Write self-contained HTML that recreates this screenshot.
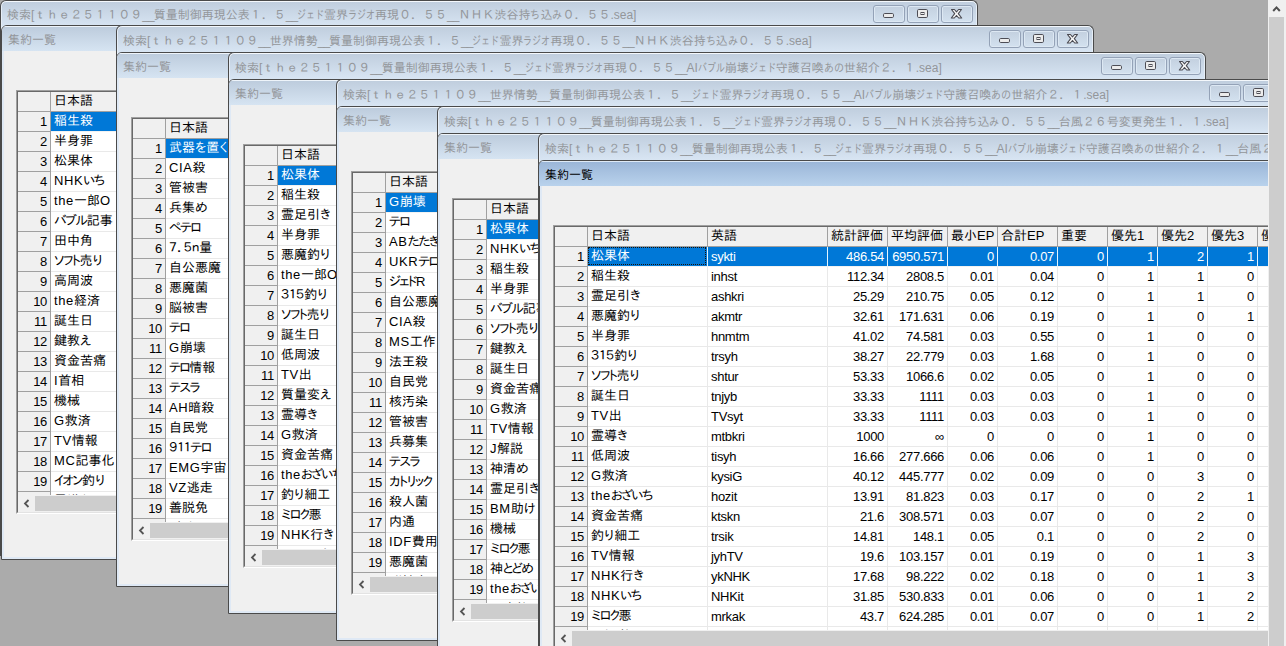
<!DOCTYPE html><html lang="ja"><head><meta charset="utf-8"><title>検索</title><style>
html,body{margin:0;padding:0}
body{width:1286px;height:646px;overflow:hidden;position:relative;background:#ababab;font-family:"Liberation Sans","IPAPGothic","IPAGothic",sans-serif;font-size:13px;color:#000}
.ow{position:absolute;width:976px;border:1px solid #4a4a4a;border-bottom:none;border-radius:6px 6px 0 0;background:#d6e4f2 linear-gradient(#bfcddd,#d8e5f3) 0 0/100% 26px no-repeat;box-shadow:inset 0 1px 0 #f4f8fc,inset 1px 0 0 #e6eef7,inset -1px 0 0 #e6eef7;overflow:hidden}
.tt{position:absolute;left:6px;top:0;white-space:nowrap;font-size:12px;color:#93969a;font-family:"Liberation Sans","IPAGothic",sans-serif}
.u{letter-spacing:-1px}
.kw{transform:scaleX(.833) !important}
.k{display:inline-block;transform:scaleX(.75);transform-origin:0 0;white-space:nowrap;vertical-align:top}
.btn{position:absolute;top:4px;width:30px;height:16px;border:1px solid #94a2b7;border-radius:3px;box-shadow:inset 0 0 0 1px #dde8f3;background:linear-gradient(#c3d0df,#d3e1ef)}
.iw{position:absolute;width:976px;height:533px;border:1px solid #4a4a4a;border-radius:6px 6px 0 0;background:#f0f0f0;overflow:hidden}
.it{position:absolute;left:0;top:0;right:0;height:25px;background:linear-gradient(#bccbdc,#d6e4f2);box-shadow:inset 0 1px 0 #eef4fa}
.iw.act .it{background:linear-gradient(#9ab5d7,#b9d2ec);box-shadow:inset 0 1px 0 #dfeaf6}
.itx{position:absolute;left:6px;top:7px;font-size:12px;line-height:14px;color:#93969a;white-space:nowrap}
.iw.act .itx{color:#000}
.iw.act{box-shadow:inset 1px 0 0 #4a4a4a}
.iw.act .fr{left:1px}
.fr{position:absolute;left:0;top:25px;right:0;bottom:0;border:2px solid #dfe9f5;border-top:none}
.grid{position:absolute;left:14px;top:64px;border:1px solid #a0a0a0;border-right-color:#fff;border-bottom-color:#fff;overflow:hidden}
.gi{position:relative;border:1px solid #696969;border-right-color:#e3e3e3;border-bottom-color:#e3e3e3;background:#fff;overflow:hidden}
.c{position:absolute;height:19px;line-height:19px;white-space:nowrap;overflow:hidden;box-sizing:border-box}
.h{background:#f0f0f0;border-right:1px solid #a0a0a0;border-bottom:1px solid #a0a0a0;height:20px;padding-left:3px}
.n{background:#f0f0f0;border-right:1px solid #a0a0a0;border-bottom:1px solid #a0a0a0;height:20px;text-align:right;padding-right:3px;letter-spacing:-0.3px}
.d{border-right:1px solid #e9e9e9;border-bottom:1px solid #e9e9e9;height:20px;padding-left:3px}
.r{text-align:right;padding-right:3px;padding-left:0}
.l{letter-spacing:-0.3px}
.j{line-height:17px}
.kk{letter-spacing:-1.5px}
.kh{letter-spacing:-1.6px}
.la{letter-spacing:.6px}
.fc{position:absolute;left:0;top:0;right:1px;bottom:1px;border:1px dotted #1a1208}
.s{background:#0078d7;color:#fff;border-right-color:#e2f4ff;border-bottom-color:#f2f2f2}
.hs{position:absolute;left:0;height:17px;background:#f0f0f0}
.th{position:absolute;left:17px;top:1px;height:15px;background:#cdcdcd}
.vs{position:absolute;left:1268px;top:0;width:18px;height:646px;background:#f0f0f0}
.vt{position:absolute;left:1px;top:17px;width:15px;height:629px;background:#cdcdcd}
</style></head><body>
<div class="ow" style="left:0px;top:0px;height:555px;z-index:10">
<div class="tt" style="line-height:14px;top:7px">検索[ｔｈｅ２５１１０９<span class="u">__</span>質量制御再現公表１．５<span class="u">__</span><span class="k" style="width:27.0px">ジェド</span>霊界<span class="k" style="width:27.0px">ラジオ</span>再現０．５５<span class="u">__</span>ＮＨＫ渋谷持<span class="k kw" style="width:10.0px">ち</span>込<span class="k kw" style="width:10.0px">み</span>０．５５.sea]</div>
<div class="btn" style="left:872px"><svg width="29" height="16" viewBox="0 0 29 16" style="position:absolute;left:0;top:0"><rect x="9.5" y="7.5" width="10" height="4" rx="1.2" fill="#ececec" stroke="#4d4d55" stroke-width="1"/></svg></div>
<div class="btn" style="left:906px"><svg width="29" height="16" viewBox="0 0 29 16" style="position:absolute;left:0;top:0"><rect x="9.5" y="3.5" width="10" height="8" rx="1.2" fill="#ececec" stroke="#4d4d55" stroke-width="1"/><rect x="13" y="6.5" width="3" height="2" fill="#ececec" stroke="#4d4d55" stroke-width="1"/></svg></div>
<div class="btn" style="left:940px"><svg width="29" height="16" viewBox="0 0 29 16" style="position:absolute;left:0;top:0"><path d="M9.5 3.5 L12.4 3.5 L14.5 5.9 L16.6 3.5 L19.5 3.5 L16.3 7.7 L19.7 12 L16.7 12 L14.5 9.5 L12.3 12 L9.3 12 L12.7 7.7 Z" fill="#f6f6f6" stroke="#4a4a52" stroke-width="1.1" stroke-linejoin="round"/></svg></div>
</div>
<div class="iw" style="left:1px;top:25px;z-index:10">
<div class="it"><div class="itx">集約一覧</div></div><div class="fr"></div>
<div class="grid" style="width:1400px;height:422px"><div class="gi" style="width:1398px;height:420px"><div class="c n" style="left:0;top:0;width:33px"></div><div class="c h j" style="left:33px;top:0;width:120px">日本語</div><div class="c h j" style="left:153px;top:0;width:120px">英語</div><div class="c n" style="left:0;top:20px;width:33px">1</div><div class="c d j s" style="left:33px;top:20px;width:120px">稲生殺</div><div class="c d l s" style="left:153px;top:20px;width:120px"></div><div class="c n" style="left:0;top:40px;width:33px">2</div><div class="c d j" style="left:33px;top:40px;width:120px">半身罪</div><div class="c d l" style="left:153px;top:40px;width:120px"></div><div class="c n" style="left:0;top:60px;width:33px">3</div><div class="c d j" style="left:33px;top:60px;width:120px">松果体</div><div class="c d l" style="left:153px;top:60px;width:120px"></div><div class="c n" style="left:0;top:80px;width:33px">4</div><div class="c d j" style="left:33px;top:80px;width:120px"><span class="la">NHK</span><span class="kh">いち</span></div><div class="c d l" style="left:153px;top:80px;width:120px"></div><div class="c n" style="left:0;top:100px;width:33px">5</div><div class="c d j" style="left:33px;top:100px;width:120px"><span class="la">the</span>一郎<span class="la">O</span></div><div class="c d l" style="left:153px;top:100px;width:120px"></div><div class="c n" style="left:0;top:120px;width:33px">6</div><div class="c d j" style="left:33px;top:120px;width:120px"><span class="kk">バブル</span>記事</div><div class="c d l" style="left:153px;top:120px;width:120px"></div><div class="c n" style="left:0;top:140px;width:33px">7</div><div class="c d j" style="left:33px;top:140px;width:120px">田中角</div><div class="c d l" style="left:153px;top:140px;width:120px"></div><div class="c n" style="left:0;top:160px;width:33px">8</div><div class="c d j" style="left:33px;top:160px;width:120px"><span class="kk">ソフト</span>売り</div><div class="c d l" style="left:153px;top:160px;width:120px"></div><div class="c n" style="left:0;top:180px;width:33px">9</div><div class="c d j" style="left:33px;top:180px;width:120px">高周波</div><div class="c d l" style="left:153px;top:180px;width:120px"></div><div class="c n" style="left:0;top:200px;width:33px">10</div><div class="c d j" style="left:33px;top:200px;width:120px"><span class="la">the</span>経済</div><div class="c d l" style="left:153px;top:200px;width:120px"></div><div class="c n" style="left:0;top:220px;width:33px">11</div><div class="c d j" style="left:33px;top:220px;width:120px">誕生日</div><div class="c d l" style="left:153px;top:220px;width:120px"></div><div class="c n" style="left:0;top:240px;width:33px">12</div><div class="c d j" style="left:33px;top:240px;width:120px">鍵教え</div><div class="c d l" style="left:153px;top:240px;width:120px"></div><div class="c n" style="left:0;top:260px;width:33px">13</div><div class="c d j" style="left:33px;top:260px;width:120px">資金苦痛</div><div class="c d l" style="left:153px;top:260px;width:120px"></div><div class="c n" style="left:0;top:280px;width:33px">14</div><div class="c d j" style="left:33px;top:280px;width:120px"><span class="la">I</span>首相</div><div class="c d l" style="left:153px;top:280px;width:120px"></div><div class="c n" style="left:0;top:300px;width:33px">15</div><div class="c d j" style="left:33px;top:300px;width:120px">機械</div><div class="c d l" style="left:153px;top:300px;width:120px"></div><div class="c n" style="left:0;top:320px;width:33px">16</div><div class="c d j" style="left:33px;top:320px;width:120px"><span class="la">G</span>救済</div><div class="c d l" style="left:153px;top:320px;width:120px"></div><div class="c n" style="left:0;top:340px;width:33px">17</div><div class="c d j" style="left:33px;top:340px;width:120px"><span class="la">TV</span>情報</div><div class="c d l" style="left:153px;top:340px;width:120px"></div><div class="c n" style="left:0;top:360px;width:33px">18</div><div class="c d j" style="left:33px;top:360px;width:120px"><span class="la">MC</span>記事化</div><div class="c d l" style="left:153px;top:360px;width:120px"></div><div class="c n" style="left:0;top:380px;width:33px">19</div><div class="c d j" style="left:33px;top:380px;width:120px"><span class="kk">イオン</span>釣り</div><div class="c d l" style="left:153px;top:380px;width:120px"></div><div class="c n" style="left:0;top:400px;width:33px">20</div><div class="c d j" style="left:33px;top:400px;width:120px">霊導き</div><div class="c d l" style="left:153px;top:400px;width:120px"></div><div class="hs" style="top:403px;width:1400px"><svg style="position:absolute;left:4px;top:4px" width="9" height="9" viewBox="0 0 9 9"><path d="M6.5 1 L3 4.5 L6.5 8" fill="none" stroke="#555" stroke-width="1.8"/></svg><div class="th" style="width:1400px"></div></div></div></div>
</div>
<div class="ow" style="left:116px;top:25px;height:530px;z-index:11">
<div class="tt" style="line-height:14px;top:8px">検索[ｔｈｅ２５１１０９<span class="u">__</span>世界情勢<span class="u">__</span>質量制御再現公表１．５<span class="u">__</span><span class="k" style="width:27.0px">ジェド</span>霊界<span class="k" style="width:27.0px">ラジオ</span>再現０．５５<span class="u">__</span>ＮＨＫ渋谷持<span class="k kw" style="width:10.0px">ち</span>込<span class="k kw" style="width:10.0px">み</span>０．５５.sea]</div>
<div class="btn" style="left:872px"><svg width="29" height="16" viewBox="0 0 29 16" style="position:absolute;left:0;top:0"><rect x="9.5" y="7.5" width="10" height="4" rx="1.2" fill="#ececec" stroke="#4d4d55" stroke-width="1"/></svg></div>
<div class="btn" style="left:906px"><svg width="29" height="16" viewBox="0 0 29 16" style="position:absolute;left:0;top:0"><rect x="9.5" y="3.5" width="10" height="8" rx="1.2" fill="#ececec" stroke="#4d4d55" stroke-width="1"/><rect x="13" y="6.5" width="3" height="2" fill="#ececec" stroke="#4d4d55" stroke-width="1"/></svg></div>
<div class="btn" style="left:940px"><svg width="29" height="16" viewBox="0 0 29 16" style="position:absolute;left:0;top:0"><path d="M9.5 3.5 L12.4 3.5 L14.5 5.9 L16.6 3.5 L19.5 3.5 L16.3 7.7 L19.7 12 L16.7 12 L14.5 9.5 L12.3 12 L9.3 12 L12.7 7.7 Z" fill="#f6f6f6" stroke="#4a4a52" stroke-width="1.1" stroke-linejoin="round"/></svg></div>
</div>
<div class="iw" style="left:116px;top:52px;z-index:11">
<div class="it"><div class="itx">集約一覧</div></div><div class="fr"></div>
<div class="grid" style="width:1400px;height:422px"><div class="gi" style="width:1398px;height:420px"><div class="c n" style="left:0;top:0;width:33px"></div><div class="c h j" style="left:33px;top:0;width:120px">日本語</div><div class="c h j" style="left:153px;top:0;width:120px">英語</div><div class="c n" style="left:0;top:20px;width:33px">1</div><div class="c d j s" style="left:33px;top:20px;width:120px">武器を置く</div><div class="c d l s" style="left:153px;top:20px;width:120px"></div><div class="c n" style="left:0;top:40px;width:33px">2</div><div class="c d j" style="left:33px;top:40px;width:120px"><span class="la">CIA</span>殺</div><div class="c d l" style="left:153px;top:40px;width:120px"></div><div class="c n" style="left:0;top:60px;width:33px">3</div><div class="c d j" style="left:33px;top:60px;width:120px">管被害</div><div class="c d l" style="left:153px;top:60px;width:120px"></div><div class="c n" style="left:0;top:80px;width:33px">4</div><div class="c d j" style="left:33px;top:80px;width:120px">兵集め</div><div class="c d l" style="left:153px;top:80px;width:120px"></div><div class="c n" style="left:0;top:100px;width:33px">5</div><div class="c d j" style="left:33px;top:100px;width:120px"><span class="kk">ペテロ</span></div><div class="c d l" style="left:153px;top:100px;width:120px"></div><div class="c n" style="left:0;top:120px;width:33px">6</div><div class="c d j" style="left:33px;top:120px;width:120px">７．５ｎ量</div><div class="c d l" style="left:153px;top:120px;width:120px"></div><div class="c n" style="left:0;top:140px;width:33px">7</div><div class="c d j" style="left:33px;top:140px;width:120px">自公悪魔</div><div class="c d l" style="left:153px;top:140px;width:120px"></div><div class="c n" style="left:0;top:160px;width:33px">8</div><div class="c d j" style="left:33px;top:160px;width:120px">悪魔菌</div><div class="c d l" style="left:153px;top:160px;width:120px"></div><div class="c n" style="left:0;top:180px;width:33px">9</div><div class="c d j" style="left:33px;top:180px;width:120px">脳被害</div><div class="c d l" style="left:153px;top:180px;width:120px"></div><div class="c n" style="left:0;top:200px;width:33px">10</div><div class="c d j" style="left:33px;top:200px;width:120px"><span class="kk">テロ</span></div><div class="c d l" style="left:153px;top:200px;width:120px"></div><div class="c n" style="left:0;top:220px;width:33px">11</div><div class="c d j" style="left:33px;top:220px;width:120px"><span class="la">G</span>崩壊</div><div class="c d l" style="left:153px;top:220px;width:120px"></div><div class="c n" style="left:0;top:240px;width:33px">12</div><div class="c d j" style="left:33px;top:240px;width:120px"><span class="kk">テロ</span>情報</div><div class="c d l" style="left:153px;top:240px;width:120px"></div><div class="c n" style="left:0;top:260px;width:33px">13</div><div class="c d j" style="left:33px;top:260px;width:120px"><span class="kk">テスラ</span></div><div class="c d l" style="left:153px;top:260px;width:120px"></div><div class="c n" style="left:0;top:280px;width:33px">14</div><div class="c d j" style="left:33px;top:280px;width:120px"><span class="la">AH</span>暗殺</div><div class="c d l" style="left:153px;top:280px;width:120px"></div><div class="c n" style="left:0;top:300px;width:33px">15</div><div class="c d j" style="left:33px;top:300px;width:120px">自民党</div><div class="c d l" style="left:153px;top:300px;width:120px"></div><div class="c n" style="left:0;top:320px;width:33px">16</div><div class="c d j" style="left:33px;top:320px;width:120px">９１１<span class="kk">テロ</span></div><div class="c d l" style="left:153px;top:320px;width:120px"></div><div class="c n" style="left:0;top:340px;width:33px">17</div><div class="c d j" style="left:33px;top:340px;width:120px"><span class="la">EMG</span>宇宙</div><div class="c d l" style="left:153px;top:340px;width:120px"></div><div class="c n" style="left:0;top:360px;width:33px">18</div><div class="c d j" style="left:33px;top:360px;width:120px"><span class="la">VZ</span>逃走</div><div class="c d l" style="left:153px;top:360px;width:120px"></div><div class="c n" style="left:0;top:380px;width:33px">19</div><div class="c d j" style="left:33px;top:380px;width:120px">善脱免</div><div class="c d l" style="left:153px;top:380px;width:120px"></div><div class="c n" style="left:0;top:400px;width:33px">20</div><div class="c d j" style="left:33px;top:400px;width:120px"><span class="kk">ジェド</span><span class="la">R</span></div><div class="c d l" style="left:153px;top:400px;width:120px"></div><div class="hs" style="top:403px;width:1400px"><svg style="position:absolute;left:4px;top:4px" width="9" height="9" viewBox="0 0 9 9"><path d="M6.5 1 L3 4.5 L6.5 8" fill="none" stroke="#555" stroke-width="1.8"/></svg><div class="th" style="width:1400px"></div></div></div></div>
</div>
<div class="ow" style="left:228px;top:52px;height:530px;z-index:12">
<div class="tt" style="line-height:14px;top:8px">検索[ｔｈｅ２５１１０９<span class="u">__</span>質量制御再現公表１．５<span class="u">__</span><span class="k" style="width:27.0px">ジェド</span>霊界<span class="k" style="width:27.0px">ラジオ</span>再現０．５５<span class="u">__</span>AI<span class="k" style="width:27.0px">バブル</span>崩壊<span class="k" style="width:27.0px">ジェド</span>守護召喚<span class="k kw" style="width:20.0px">あの</span>世紹介２．１.sea]</div>
<div class="btn" style="left:872px"><svg width="29" height="16" viewBox="0 0 29 16" style="position:absolute;left:0;top:0"><rect x="9.5" y="7.5" width="10" height="4" rx="1.2" fill="#ececec" stroke="#4d4d55" stroke-width="1"/></svg></div>
<div class="btn" style="left:906px"><svg width="29" height="16" viewBox="0 0 29 16" style="position:absolute;left:0;top:0"><rect x="9.5" y="3.5" width="10" height="8" rx="1.2" fill="#ececec" stroke="#4d4d55" stroke-width="1"/><rect x="13" y="6.5" width="3" height="2" fill="#ececec" stroke="#4d4d55" stroke-width="1"/></svg></div>
<div class="btn" style="left:940px"><svg width="29" height="16" viewBox="0 0 29 16" style="position:absolute;left:0;top:0"><path d="M9.5 3.5 L12.4 3.5 L14.5 5.9 L16.6 3.5 L19.5 3.5 L16.3 7.7 L19.7 12 L16.7 12 L14.5 9.5 L12.3 12 L9.3 12 L12.7 7.7 Z" fill="#f6f6f6" stroke="#4a4a52" stroke-width="1.1" stroke-linejoin="round"/></svg></div>
</div>
<div class="iw" style="left:228px;top:79px;z-index:12">
<div class="it"><div class="itx">集約一覧</div></div><div class="fr"></div>
<div class="grid" style="width:1400px;height:422px"><div class="gi" style="width:1398px;height:420px"><div class="c n" style="left:0;top:0;width:33px"></div><div class="c h j" style="left:33px;top:0;width:120px">日本語</div><div class="c h j" style="left:153px;top:0;width:120px">英語</div><div class="c n" style="left:0;top:20px;width:33px">1</div><div class="c d j s" style="left:33px;top:20px;width:120px">松果体</div><div class="c d l s" style="left:153px;top:20px;width:120px"></div><div class="c n" style="left:0;top:40px;width:33px">2</div><div class="c d j" style="left:33px;top:40px;width:120px">稲生殺</div><div class="c d l" style="left:153px;top:40px;width:120px"></div><div class="c n" style="left:0;top:60px;width:33px">3</div><div class="c d j" style="left:33px;top:60px;width:120px">霊足引き</div><div class="c d l" style="left:153px;top:60px;width:120px"></div><div class="c n" style="left:0;top:80px;width:33px">4</div><div class="c d j" style="left:33px;top:80px;width:120px">半身罪</div><div class="c d l" style="left:153px;top:80px;width:120px"></div><div class="c n" style="left:0;top:100px;width:33px">5</div><div class="c d j" style="left:33px;top:100px;width:120px">悪魔釣り</div><div class="c d l" style="left:153px;top:100px;width:120px"></div><div class="c n" style="left:0;top:120px;width:33px">6</div><div class="c d j" style="left:33px;top:120px;width:120px"><span class="la">the</span>一郎<span class="la">O</span></div><div class="c d l" style="left:153px;top:120px;width:120px"></div><div class="c n" style="left:0;top:140px;width:33px">7</div><div class="c d j" style="left:33px;top:140px;width:120px">３１５釣り</div><div class="c d l" style="left:153px;top:140px;width:120px"></div><div class="c n" style="left:0;top:160px;width:33px">8</div><div class="c d j" style="left:33px;top:160px;width:120px"><span class="kk">ソフト</span>売り</div><div class="c d l" style="left:153px;top:160px;width:120px"></div><div class="c n" style="left:0;top:180px;width:33px">9</div><div class="c d j" style="left:33px;top:180px;width:120px">誕生日</div><div class="c d l" style="left:153px;top:180px;width:120px"></div><div class="c n" style="left:0;top:200px;width:33px">10</div><div class="c d j" style="left:33px;top:200px;width:120px">低周波</div><div class="c d l" style="left:153px;top:200px;width:120px"></div><div class="c n" style="left:0;top:220px;width:33px">11</div><div class="c d j" style="left:33px;top:220px;width:120px"><span class="la">TV</span>出</div><div class="c d l" style="left:153px;top:220px;width:120px"></div><div class="c n" style="left:0;top:240px;width:33px">12</div><div class="c d j" style="left:33px;top:240px;width:120px">質量変え</div><div class="c d l" style="left:153px;top:240px;width:120px"></div><div class="c n" style="left:0;top:260px;width:33px">13</div><div class="c d j" style="left:33px;top:260px;width:120px">霊導き</div><div class="c d l" style="left:153px;top:260px;width:120px"></div><div class="c n" style="left:0;top:280px;width:33px">14</div><div class="c d j" style="left:33px;top:280px;width:120px"><span class="la">G</span>救済</div><div class="c d l" style="left:153px;top:280px;width:120px"></div><div class="c n" style="left:0;top:300px;width:33px">15</div><div class="c d j" style="left:33px;top:300px;width:120px">資金苦痛</div><div class="c d l" style="left:153px;top:300px;width:120px"></div><div class="c n" style="left:0;top:320px;width:33px">16</div><div class="c d j" style="left:33px;top:320px;width:120px"><span class="la">the</span><span class="kh">おざいち</span></div><div class="c d l" style="left:153px;top:320px;width:120px"></div><div class="c n" style="left:0;top:340px;width:33px">17</div><div class="c d j" style="left:33px;top:340px;width:120px">釣り細工</div><div class="c d l" style="left:153px;top:340px;width:120px"></div><div class="c n" style="left:0;top:360px;width:33px">18</div><div class="c d j" style="left:33px;top:360px;width:120px"><span class="kk">ミロク</span>悪</div><div class="c d l" style="left:153px;top:360px;width:120px"></div><div class="c n" style="left:0;top:380px;width:33px">19</div><div class="c d j" style="left:33px;top:380px;width:120px"><span class="la">NHK</span>行き</div><div class="c d l" style="left:153px;top:380px;width:120px"></div><div class="c n" style="left:0;top:400px;width:33px">20</div><div class="c d j" style="left:33px;top:400px;width:120px"><span class="la">NHK</span><span class="kh">いち</span></div><div class="c d l" style="left:153px;top:400px;width:120px"></div><div class="hs" style="top:403px;width:1400px"><svg style="position:absolute;left:4px;top:4px" width="9" height="9" viewBox="0 0 9 9"><path d="M6.5 1 L3 4.5 L6.5 8" fill="none" stroke="#555" stroke-width="1.8"/></svg><div class="th" style="width:1400px"></div></div></div></div>
</div>
<div class="ow" style="left:336px;top:79px;height:530px;z-index:13">
<div class="tt" style="line-height:14px;top:8px">検索[ｔｈｅ２５１１０９<span class="u">__</span>世界情勢<span class="u">__</span>質量制御再現公表１．５<span class="u">__</span><span class="k" style="width:27.0px">ジェド</span>霊界<span class="k" style="width:27.0px">ラジオ</span>再現０．５５<span class="u">__</span>AI<span class="k" style="width:27.0px">バブル</span>崩壊<span class="k" style="width:27.0px">ジェド</span>守護召喚<span class="k kw" style="width:20.0px">あの</span>世紹介２．１.sea]</div>
<div class="btn" style="left:872px"><svg width="29" height="16" viewBox="0 0 29 16" style="position:absolute;left:0;top:0"><rect x="9.5" y="7.5" width="10" height="4" rx="1.2" fill="#ececec" stroke="#4d4d55" stroke-width="1"/></svg></div>
<div class="btn" style="left:906px"><svg width="29" height="16" viewBox="0 0 29 16" style="position:absolute;left:0;top:0"><rect x="9.5" y="3.5" width="10" height="8" rx="1.2" fill="#ececec" stroke="#4d4d55" stroke-width="1"/><rect x="13" y="6.5" width="3" height="2" fill="#ececec" stroke="#4d4d55" stroke-width="1"/></svg></div>
<div class="btn" style="left:940px"><svg width="29" height="16" viewBox="0 0 29 16" style="position:absolute;left:0;top:0"><path d="M9.5 3.5 L12.4 3.5 L14.5 5.9 L16.6 3.5 L19.5 3.5 L16.3 7.7 L19.7 12 L16.7 12 L14.5 9.5 L12.3 12 L9.3 12 L12.7 7.7 Z" fill="#f6f6f6" stroke="#4a4a52" stroke-width="1.1" stroke-linejoin="round"/></svg></div>
</div>
<div class="iw" style="left:336px;top:106px;z-index:13">
<div class="it"><div class="itx">集約一覧</div></div><div class="fr"></div>
<div class="grid" style="width:1400px;height:422px"><div class="gi" style="width:1398px;height:420px"><div class="c n" style="left:0;top:0;width:33px"></div><div class="c h j" style="left:33px;top:0;width:120px">日本語</div><div class="c h j" style="left:153px;top:0;width:120px">英語</div><div class="c n" style="left:0;top:20px;width:33px">1</div><div class="c d j s" style="left:33px;top:20px;width:120px"><span class="la">G</span>崩壊</div><div class="c d l s" style="left:153px;top:20px;width:120px"></div><div class="c n" style="left:0;top:40px;width:33px">2</div><div class="c d j" style="left:33px;top:40px;width:120px"><span class="kk">テロ</span></div><div class="c d l" style="left:153px;top:40px;width:120px"></div><div class="c n" style="left:0;top:60px;width:33px">3</div><div class="c d j" style="left:33px;top:60px;width:120px"><span class="la">AB</span><span class="kh">たたき</span></div><div class="c d l" style="left:153px;top:60px;width:120px"></div><div class="c n" style="left:0;top:80px;width:33px">4</div><div class="c d j" style="left:33px;top:80px;width:120px"><span class="la">UKR</span><span class="kk">テロ</span></div><div class="c d l" style="left:153px;top:80px;width:120px"></div><div class="c n" style="left:0;top:100px;width:33px">5</div><div class="c d j" style="left:33px;top:100px;width:120px"><span class="kk">ジェド</span><span class="la">R</span></div><div class="c d l" style="left:153px;top:100px;width:120px"></div><div class="c n" style="left:0;top:120px;width:33px">6</div><div class="c d j" style="left:33px;top:120px;width:120px">自公悪魔</div><div class="c d l" style="left:153px;top:120px;width:120px"></div><div class="c n" style="left:0;top:140px;width:33px">7</div><div class="c d j" style="left:33px;top:140px;width:120px"><span class="la">CIA</span>殺</div><div class="c d l" style="left:153px;top:140px;width:120px"></div><div class="c n" style="left:0;top:160px;width:33px">8</div><div class="c d j" style="left:33px;top:160px;width:120px"><span class="la">MS</span>工作</div><div class="c d l" style="left:153px;top:160px;width:120px"></div><div class="c n" style="left:0;top:180px;width:33px">9</div><div class="c d j" style="left:33px;top:180px;width:120px">法王殺</div><div class="c d l" style="left:153px;top:180px;width:120px"></div><div class="c n" style="left:0;top:200px;width:33px">10</div><div class="c d j" style="left:33px;top:200px;width:120px">自民党</div><div class="c d l" style="left:153px;top:200px;width:120px"></div><div class="c n" style="left:0;top:220px;width:33px">11</div><div class="c d j" style="left:33px;top:220px;width:120px">核汚染</div><div class="c d l" style="left:153px;top:220px;width:120px"></div><div class="c n" style="left:0;top:240px;width:33px">12</div><div class="c d j" style="left:33px;top:240px;width:120px">管被害</div><div class="c d l" style="left:153px;top:240px;width:120px"></div><div class="c n" style="left:0;top:260px;width:33px">13</div><div class="c d j" style="left:33px;top:260px;width:120px">兵募集</div><div class="c d l" style="left:153px;top:260px;width:120px"></div><div class="c n" style="left:0;top:280px;width:33px">14</div><div class="c d j" style="left:33px;top:280px;width:120px"><span class="kk">テスラ</span></div><div class="c d l" style="left:153px;top:280px;width:120px"></div><div class="c n" style="left:0;top:300px;width:33px">15</div><div class="c d j" style="left:33px;top:300px;width:120px"><span class="kk">カトリック</span></div><div class="c d l" style="left:153px;top:300px;width:120px"></div><div class="c n" style="left:0;top:320px;width:33px">16</div><div class="c d j" style="left:33px;top:320px;width:120px">殺人菌</div><div class="c d l" style="left:153px;top:320px;width:120px"></div><div class="c n" style="left:0;top:340px;width:33px">17</div><div class="c d j" style="left:33px;top:340px;width:120px">内通</div><div class="c d l" style="left:153px;top:340px;width:120px"></div><div class="c n" style="left:0;top:360px;width:33px">18</div><div class="c d j" style="left:33px;top:360px;width:120px"><span class="la">IDF</span>費用</div><div class="c d l" style="left:153px;top:360px;width:120px"></div><div class="c n" style="left:0;top:380px;width:33px">19</div><div class="c d j" style="left:33px;top:380px;width:120px">悪魔菌</div><div class="c d l" style="left:153px;top:380px;width:120px"></div><div class="c n" style="left:0;top:400px;width:33px">20</div><div class="c d j" style="left:33px;top:400px;width:120px">脳被害</div><div class="c d l" style="left:153px;top:400px;width:120px"></div><div class="hs" style="top:403px;width:1400px"><svg style="position:absolute;left:4px;top:4px" width="9" height="9" viewBox="0 0 9 9"><path d="M6.5 1 L3 4.5 L6.5 8" fill="none" stroke="#555" stroke-width="1.8"/></svg><div class="th" style="width:1400px"></div></div></div></div>
</div>
<div class="ow" style="left:437px;top:106px;height:530px;z-index:14">
<div class="tt" style="line-height:14px;top:8px">検索[ｔｈｅ２５１１０９<span class="u">__</span>質量制御再現公表１．５<span class="u">__</span><span class="k" style="width:27.0px">ジェド</span>霊界<span class="k" style="width:27.0px">ラジオ</span>再現０．５５<span class="u">__</span>ＮＨＫ渋谷持<span class="k kw" style="width:10.0px">ち</span>込<span class="k kw" style="width:10.0px">み</span>０．５５<span class="u">__</span>台風２６号変更発生１．１.sea]</div>
<div class="btn" style="left:872px"><svg width="29" height="16" viewBox="0 0 29 16" style="position:absolute;left:0;top:0"><rect x="9.5" y="7.5" width="10" height="4" rx="1.2" fill="#ececec" stroke="#4d4d55" stroke-width="1"/></svg></div>
<div class="btn" style="left:906px"><svg width="29" height="16" viewBox="0 0 29 16" style="position:absolute;left:0;top:0"><rect x="9.5" y="3.5" width="10" height="8" rx="1.2" fill="#ececec" stroke="#4d4d55" stroke-width="1"/><rect x="13" y="6.5" width="3" height="2" fill="#ececec" stroke="#4d4d55" stroke-width="1"/></svg></div>
<div class="btn" style="left:940px"><svg width="29" height="16" viewBox="0 0 29 16" style="position:absolute;left:0;top:0"><path d="M9.5 3.5 L12.4 3.5 L14.5 5.9 L16.6 3.5 L19.5 3.5 L16.3 7.7 L19.7 12 L16.7 12 L14.5 9.5 L12.3 12 L9.3 12 L12.7 7.7 Z" fill="#f6f6f6" stroke="#4a4a52" stroke-width="1.1" stroke-linejoin="round"/></svg></div>
</div>
<div class="iw" style="left:437px;top:133px;z-index:14">
<div class="it"><div class="itx">集約一覧</div></div><div class="fr"></div>
<div class="grid" style="width:1400px;height:422px"><div class="gi" style="width:1398px;height:420px"><div class="c n" style="left:0;top:0;width:33px"></div><div class="c h j" style="left:33px;top:0;width:120px">日本語</div><div class="c h j" style="left:153px;top:0;width:120px">英語</div><div class="c n" style="left:0;top:20px;width:33px">1</div><div class="c d j s" style="left:33px;top:20px;width:120px">松果体</div><div class="c d l s" style="left:153px;top:20px;width:120px"></div><div class="c n" style="left:0;top:40px;width:33px">2</div><div class="c d j" style="left:33px;top:40px;width:120px"><span class="la">NHK</span><span class="kh">いち</span></div><div class="c d l" style="left:153px;top:40px;width:120px"></div><div class="c n" style="left:0;top:60px;width:33px">3</div><div class="c d j" style="left:33px;top:60px;width:120px">稲生殺</div><div class="c d l" style="left:153px;top:60px;width:120px"></div><div class="c n" style="left:0;top:80px;width:33px">4</div><div class="c d j" style="left:33px;top:80px;width:120px">半身罪</div><div class="c d l" style="left:153px;top:80px;width:120px"></div><div class="c n" style="left:0;top:100px;width:33px">5</div><div class="c d j" style="left:33px;top:100px;width:120px"><span class="kk">バブル</span>記事</div><div class="c d l" style="left:153px;top:100px;width:120px"></div><div class="c n" style="left:0;top:120px;width:33px">6</div><div class="c d j" style="left:33px;top:120px;width:120px"><span class="kk">ソフト</span>売り</div><div class="c d l" style="left:153px;top:120px;width:120px"></div><div class="c n" style="left:0;top:140px;width:33px">7</div><div class="c d j" style="left:33px;top:140px;width:120px">鍵教え</div><div class="c d l" style="left:153px;top:140px;width:120px"></div><div class="c n" style="left:0;top:160px;width:33px">8</div><div class="c d j" style="left:33px;top:160px;width:120px">誕生日</div><div class="c d l" style="left:153px;top:160px;width:120px"></div><div class="c n" style="left:0;top:180px;width:33px">9</div><div class="c d j" style="left:33px;top:180px;width:120px">資金苦痛</div><div class="c d l" style="left:153px;top:180px;width:120px"></div><div class="c n" style="left:0;top:200px;width:33px">10</div><div class="c d j" style="left:33px;top:200px;width:120px"><span class="la">G</span>救済</div><div class="c d l" style="left:153px;top:200px;width:120px"></div><div class="c n" style="left:0;top:220px;width:33px">11</div><div class="c d j" style="left:33px;top:220px;width:120px"><span class="la">TV</span>情報</div><div class="c d l" style="left:153px;top:220px;width:120px"></div><div class="c n" style="left:0;top:240px;width:33px">12</div><div class="c d j" style="left:33px;top:240px;width:120px"><span class="la">J</span>解説</div><div class="c d l" style="left:153px;top:240px;width:120px"></div><div class="c n" style="left:0;top:260px;width:33px">13</div><div class="c d j" style="left:33px;top:260px;width:120px">神清め</div><div class="c d l" style="left:153px;top:260px;width:120px"></div><div class="c n" style="left:0;top:280px;width:33px">14</div><div class="c d j" style="left:33px;top:280px;width:120px">霊足引き</div><div class="c d l" style="left:153px;top:280px;width:120px"></div><div class="c n" style="left:0;top:300px;width:33px">15</div><div class="c d j" style="left:33px;top:300px;width:120px"><span class="la">BM</span>助け</div><div class="c d l" style="left:153px;top:300px;width:120px"></div><div class="c n" style="left:0;top:320px;width:33px">16</div><div class="c d j" style="left:33px;top:320px;width:120px">機械</div><div class="c d l" style="left:153px;top:320px;width:120px"></div><div class="c n" style="left:0;top:340px;width:33px">17</div><div class="c d j" style="left:33px;top:340px;width:120px"><span class="kk">ミロク</span>悪</div><div class="c d l" style="left:153px;top:340px;width:120px"></div><div class="c n" style="left:0;top:360px;width:33px">18</div><div class="c d j" style="left:33px;top:360px;width:120px">神<span class="kh">とどめ</span></div><div class="c d l" style="left:153px;top:360px;width:120px"></div><div class="c n" style="left:0;top:380px;width:33px">19</div><div class="c d j" style="left:33px;top:380px;width:120px"><span class="la">the</span><span class="kh">おざいち</span></div><div class="c d l" style="left:153px;top:380px;width:120px"></div><div class="c n" style="left:0;top:400px;width:33px">20</div><div class="c d j" style="left:33px;top:400px;width:120px">悪魔釣り</div><div class="c d l" style="left:153px;top:400px;width:120px"></div><div class="hs" style="top:403px;width:1400px"><svg style="position:absolute;left:4px;top:4px" width="9" height="9" viewBox="0 0 9 9"><path d="M6.5 1 L3 4.5 L6.5 8" fill="none" stroke="#555" stroke-width="1.8"/></svg><div class="th" style="width:1400px"></div></div></div></div>
</div>
<div class="ow" style="left:538px;top:133px;height:530px;z-index:15">
<div class="tt" style="line-height:14px;top:8px">検索[ｔｈｅ２５１１０９<span class="u">__</span>質量制御再現公表１．５<span class="u">__</span><span class="k" style="width:27.0px">ジェド</span>霊界<span class="k" style="width:27.0px">ラジオ</span>再現０．５５<span class="u">__</span>AI<span class="k" style="width:27.0px">バブル</span>崩壊<span class="k" style="width:27.0px">ジェド</span>守護召喚<span class="k kw" style="width:20.0px">あの</span>世紹介２．１<span class="u">__</span>台風２６号変更発生１．１.sea]</div>
<div class="btn" style="left:872px"><svg width="29" height="16" viewBox="0 0 29 16" style="position:absolute;left:0;top:0"><rect x="9.5" y="7.5" width="10" height="4" rx="1.2" fill="#ececec" stroke="#4d4d55" stroke-width="1"/></svg></div>
<div class="btn" style="left:906px"><svg width="29" height="16" viewBox="0 0 29 16" style="position:absolute;left:0;top:0"><rect x="9.5" y="3.5" width="10" height="8" rx="1.2" fill="#ececec" stroke="#4d4d55" stroke-width="1"/><rect x="13" y="6.5" width="3" height="2" fill="#ececec" stroke="#4d4d55" stroke-width="1"/></svg></div>
<div class="btn" style="left:940px"><svg width="29" height="16" viewBox="0 0 29 16" style="position:absolute;left:0;top:0"><path d="M9.5 3.5 L12.4 3.5 L14.5 5.9 L16.6 3.5 L19.5 3.5 L16.3 7.7 L19.7 12 L16.7 12 L14.5 9.5 L12.3 12 L9.3 12 L12.7 7.7 Z" fill="#f6f6f6" stroke="#4a4a52" stroke-width="1.1" stroke-linejoin="round"/></svg></div>
</div>
<div class="iw act" style="left:538px;top:160px;z-index:15">
<div class="it"><div class="itx">集約一覧</div></div><div class="fr"></div>
<div class="grid" style="width:1400px;height:422px"><div class="gi" style="width:1398px;height:420px"><div class="c n" style="left:0;top:0;width:33px"></div><div class="c h j" style="left:33px;top:0;width:120px">日本語</div><div class="c h j" style="left:153px;top:0;width:120px">英語</div><div class="c h j" style="left:273px;top:0;width:60px">統計評価</div><div class="c h j" style="left:333px;top:0;width:60px">平均評価</div><div class="c h j" style="left:393px;top:0;width:50px">最小EP</div><div class="c h j" style="left:443px;top:0;width:60px">合計EP</div><div class="c h j" style="left:503px;top:0;width:50px">重要</div><div class="c h j" style="left:553px;top:0;width:50px">優先1</div><div class="c h j" style="left:603px;top:0;width:50px">優先2</div><div class="c h j" style="left:653px;top:0;width:50px">優先3</div><div class="c h j" style="left:703px;top:0;width:50px">優先4</div><div class="c n" style="left:0;top:20px;width:33px">1</div><div class="c d j s" style="left:33px;top:20px;width:120px">松果体<div class="fc"></div></div><div class="c d l s" style="left:153px;top:20px;width:120px">sykti</div><div class="c d r l s" style="left:273px;top:20px;width:60px">486.54</div><div class="c d r l s" style="left:333px;top:20px;width:60px">6950.571</div><div class="c d r l s" style="left:393px;top:20px;width:50px">0</div><div class="c d r l s" style="left:443px;top:20px;width:60px">0.07</div><div class="c d r l s" style="left:503px;top:20px;width:50px">0</div><div class="c d r l s" style="left:553px;top:20px;width:50px">1</div><div class="c d r l s" style="left:603px;top:20px;width:50px">2</div><div class="c d r l s" style="left:653px;top:20px;width:50px">1</div><div class="c d r l s" style="left:703px;top:20px;width:50px"></div><div class="c n" style="left:0;top:40px;width:33px">2</div><div class="c d j" style="left:33px;top:40px;width:120px">稲生殺</div><div class="c d l" style="left:153px;top:40px;width:120px">inhst</div><div class="c d r l" style="left:273px;top:40px;width:60px">112.34</div><div class="c d r l" style="left:333px;top:40px;width:60px">2808.5</div><div class="c d r l" style="left:393px;top:40px;width:50px">0.01</div><div class="c d r l" style="left:443px;top:40px;width:60px">0.04</div><div class="c d r l" style="left:503px;top:40px;width:50px">0</div><div class="c d r l" style="left:553px;top:40px;width:50px">1</div><div class="c d r l" style="left:603px;top:40px;width:50px">1</div><div class="c d r l" style="left:653px;top:40px;width:50px">0</div><div class="c d r l" style="left:703px;top:40px;width:50px"></div><div class="c n" style="left:0;top:60px;width:33px">3</div><div class="c d j" style="left:33px;top:60px;width:120px">霊足引き</div><div class="c d l" style="left:153px;top:60px;width:120px">ashkri</div><div class="c d r l" style="left:273px;top:60px;width:60px">25.29</div><div class="c d r l" style="left:333px;top:60px;width:60px">210.75</div><div class="c d r l" style="left:393px;top:60px;width:50px">0.05</div><div class="c d r l" style="left:443px;top:60px;width:60px">0.12</div><div class="c d r l" style="left:503px;top:60px;width:50px">0</div><div class="c d r l" style="left:553px;top:60px;width:50px">1</div><div class="c d r l" style="left:603px;top:60px;width:50px">1</div><div class="c d r l" style="left:653px;top:60px;width:50px">0</div><div class="c d r l" style="left:703px;top:60px;width:50px"></div><div class="c n" style="left:0;top:80px;width:33px">4</div><div class="c d j" style="left:33px;top:80px;width:120px">悪魔釣り</div><div class="c d l" style="left:153px;top:80px;width:120px">akmtr</div><div class="c d r l" style="left:273px;top:80px;width:60px">32.61</div><div class="c d r l" style="left:333px;top:80px;width:60px">171.631</div><div class="c d r l" style="left:393px;top:80px;width:50px">0.06</div><div class="c d r l" style="left:443px;top:80px;width:60px">0.19</div><div class="c d r l" style="left:503px;top:80px;width:50px">0</div><div class="c d r l" style="left:553px;top:80px;width:50px">1</div><div class="c d r l" style="left:603px;top:80px;width:50px">0</div><div class="c d r l" style="left:653px;top:80px;width:50px">1</div><div class="c d r l" style="left:703px;top:80px;width:50px"></div><div class="c n" style="left:0;top:100px;width:33px">5</div><div class="c d j" style="left:33px;top:100px;width:120px">半身罪</div><div class="c d l" style="left:153px;top:100px;width:120px">hnmtm</div><div class="c d r l" style="left:273px;top:100px;width:60px">41.02</div><div class="c d r l" style="left:333px;top:100px;width:60px">74.581</div><div class="c d r l" style="left:393px;top:100px;width:50px">0.03</div><div class="c d r l" style="left:443px;top:100px;width:60px">0.55</div><div class="c d r l" style="left:503px;top:100px;width:50px">0</div><div class="c d r l" style="left:553px;top:100px;width:50px">1</div><div class="c d r l" style="left:603px;top:100px;width:50px">0</div><div class="c d r l" style="left:653px;top:100px;width:50px">0</div><div class="c d r l" style="left:703px;top:100px;width:50px"></div><div class="c n" style="left:0;top:120px;width:33px">6</div><div class="c d j" style="left:33px;top:120px;width:120px">３１５釣り</div><div class="c d l" style="left:153px;top:120px;width:120px">trsyh</div><div class="c d r l" style="left:273px;top:120px;width:60px">38.27</div><div class="c d r l" style="left:333px;top:120px;width:60px">22.779</div><div class="c d r l" style="left:393px;top:120px;width:50px">0.03</div><div class="c d r l" style="left:443px;top:120px;width:60px">1.68</div><div class="c d r l" style="left:503px;top:120px;width:50px">0</div><div class="c d r l" style="left:553px;top:120px;width:50px">1</div><div class="c d r l" style="left:603px;top:120px;width:50px">0</div><div class="c d r l" style="left:653px;top:120px;width:50px">0</div><div class="c d r l" style="left:703px;top:120px;width:50px"></div><div class="c n" style="left:0;top:140px;width:33px">7</div><div class="c d j" style="left:33px;top:140px;width:120px"><span class="kk">ソフト</span>売り</div><div class="c d l" style="left:153px;top:140px;width:120px">shtur</div><div class="c d r l" style="left:273px;top:140px;width:60px">53.33</div><div class="c d r l" style="left:333px;top:140px;width:60px">1066.6</div><div class="c d r l" style="left:393px;top:140px;width:50px">0.02</div><div class="c d r l" style="left:443px;top:140px;width:60px">0.05</div><div class="c d r l" style="left:503px;top:140px;width:50px">0</div><div class="c d r l" style="left:553px;top:140px;width:50px">1</div><div class="c d r l" style="left:603px;top:140px;width:50px">0</div><div class="c d r l" style="left:653px;top:140px;width:50px">0</div><div class="c d r l" style="left:703px;top:140px;width:50px"></div><div class="c n" style="left:0;top:160px;width:33px">8</div><div class="c d j" style="left:33px;top:160px;width:120px">誕生日</div><div class="c d l" style="left:153px;top:160px;width:120px">tnjyb</div><div class="c d r l" style="left:273px;top:160px;width:60px">33.33</div><div class="c d r l" style="left:333px;top:160px;width:60px">1111</div><div class="c d r l" style="left:393px;top:160px;width:50px">0.03</div><div class="c d r l" style="left:443px;top:160px;width:60px">0.03</div><div class="c d r l" style="left:503px;top:160px;width:50px">0</div><div class="c d r l" style="left:553px;top:160px;width:50px">1</div><div class="c d r l" style="left:603px;top:160px;width:50px">0</div><div class="c d r l" style="left:653px;top:160px;width:50px">0</div><div class="c d r l" style="left:703px;top:160px;width:50px"></div><div class="c n" style="left:0;top:180px;width:33px">9</div><div class="c d j" style="left:33px;top:180px;width:120px"><span class="la">TV</span>出</div><div class="c d l" style="left:153px;top:180px;width:120px">TVsyt</div><div class="c d r l" style="left:273px;top:180px;width:60px">33.33</div><div class="c d r l" style="left:333px;top:180px;width:60px">1111</div><div class="c d r l" style="left:393px;top:180px;width:50px">0.03</div><div class="c d r l" style="left:443px;top:180px;width:60px">0.03</div><div class="c d r l" style="left:503px;top:180px;width:50px">0</div><div class="c d r l" style="left:553px;top:180px;width:50px">1</div><div class="c d r l" style="left:603px;top:180px;width:50px">0</div><div class="c d r l" style="left:653px;top:180px;width:50px">0</div><div class="c d r l" style="left:703px;top:180px;width:50px"></div><div class="c n" style="left:0;top:200px;width:33px">10</div><div class="c d j" style="left:33px;top:200px;width:120px">霊導き</div><div class="c d l" style="left:153px;top:200px;width:120px">mtbkri</div><div class="c d r l" style="left:273px;top:200px;width:60px">1000</div><div class="c d r l" style="left:333px;top:200px;width:60px">∞</div><div class="c d r l" style="left:393px;top:200px;width:50px">0</div><div class="c d r l" style="left:443px;top:200px;width:60px">0</div><div class="c d r l" style="left:503px;top:200px;width:50px">0</div><div class="c d r l" style="left:553px;top:200px;width:50px">1</div><div class="c d r l" style="left:603px;top:200px;width:50px">0</div><div class="c d r l" style="left:653px;top:200px;width:50px">0</div><div class="c d r l" style="left:703px;top:200px;width:50px"></div><div class="c n" style="left:0;top:220px;width:33px">11</div><div class="c d j" style="left:33px;top:220px;width:120px">低周波</div><div class="c d l" style="left:153px;top:220px;width:120px">tisyh</div><div class="c d r l" style="left:273px;top:220px;width:60px">16.66</div><div class="c d r l" style="left:333px;top:220px;width:60px">277.666</div><div class="c d r l" style="left:393px;top:220px;width:50px">0.06</div><div class="c d r l" style="left:443px;top:220px;width:60px">0.06</div><div class="c d r l" style="left:503px;top:220px;width:50px">0</div><div class="c d r l" style="left:553px;top:220px;width:50px">1</div><div class="c d r l" style="left:603px;top:220px;width:50px">0</div><div class="c d r l" style="left:653px;top:220px;width:50px">0</div><div class="c d r l" style="left:703px;top:220px;width:50px"></div><div class="c n" style="left:0;top:240px;width:33px">12</div><div class="c d j" style="left:33px;top:240px;width:120px"><span class="la">G</span>救済</div><div class="c d l" style="left:153px;top:240px;width:120px">kysiG</div><div class="c d r l" style="left:273px;top:240px;width:60px">40.12</div><div class="c d r l" style="left:333px;top:240px;width:60px">445.777</div><div class="c d r l" style="left:393px;top:240px;width:50px">0.02</div><div class="c d r l" style="left:443px;top:240px;width:60px">0.09</div><div class="c d r l" style="left:503px;top:240px;width:50px">0</div><div class="c d r l" style="left:553px;top:240px;width:50px">0</div><div class="c d r l" style="left:603px;top:240px;width:50px">3</div><div class="c d r l" style="left:653px;top:240px;width:50px">0</div><div class="c d r l" style="left:703px;top:240px;width:50px"></div><div class="c n" style="left:0;top:260px;width:33px">13</div><div class="c d j" style="left:33px;top:260px;width:120px"><span class="la">the</span><span class="kh">おざいち</span></div><div class="c d l" style="left:153px;top:260px;width:120px">hozit</div><div class="c d r l" style="left:273px;top:260px;width:60px">13.91</div><div class="c d r l" style="left:333px;top:260px;width:60px">81.823</div><div class="c d r l" style="left:393px;top:260px;width:50px">0.03</div><div class="c d r l" style="left:443px;top:260px;width:60px">0.17</div><div class="c d r l" style="left:503px;top:260px;width:50px">0</div><div class="c d r l" style="left:553px;top:260px;width:50px">0</div><div class="c d r l" style="left:603px;top:260px;width:50px">2</div><div class="c d r l" style="left:653px;top:260px;width:50px">1</div><div class="c d r l" style="left:703px;top:260px;width:50px"></div><div class="c n" style="left:0;top:280px;width:33px">14</div><div class="c d j" style="left:33px;top:280px;width:120px">資金苦痛</div><div class="c d l" style="left:153px;top:280px;width:120px">ktskn</div><div class="c d r l" style="left:273px;top:280px;width:60px">21.6</div><div class="c d r l" style="left:333px;top:280px;width:60px">308.571</div><div class="c d r l" style="left:393px;top:280px;width:50px">0.03</div><div class="c d r l" style="left:443px;top:280px;width:60px">0.07</div><div class="c d r l" style="left:503px;top:280px;width:50px">0</div><div class="c d r l" style="left:553px;top:280px;width:50px">0</div><div class="c d r l" style="left:603px;top:280px;width:50px">2</div><div class="c d r l" style="left:653px;top:280px;width:50px">0</div><div class="c d r l" style="left:703px;top:280px;width:50px"></div><div class="c n" style="left:0;top:300px;width:33px">15</div><div class="c d j" style="left:33px;top:300px;width:120px">釣り細工</div><div class="c d l" style="left:153px;top:300px;width:120px">trsik</div><div class="c d r l" style="left:273px;top:300px;width:60px">14.81</div><div class="c d r l" style="left:333px;top:300px;width:60px">148.1</div><div class="c d r l" style="left:393px;top:300px;width:50px">0.05</div><div class="c d r l" style="left:443px;top:300px;width:60px">0.1</div><div class="c d r l" style="left:503px;top:300px;width:50px">0</div><div class="c d r l" style="left:553px;top:300px;width:50px">0</div><div class="c d r l" style="left:603px;top:300px;width:50px">2</div><div class="c d r l" style="left:653px;top:300px;width:50px">0</div><div class="c d r l" style="left:703px;top:300px;width:50px"></div><div class="c n" style="left:0;top:320px;width:33px">16</div><div class="c d j" style="left:33px;top:320px;width:120px"><span class="la">TV</span>情報</div><div class="c d l" style="left:153px;top:320px;width:120px">jyhTV</div><div class="c d r l" style="left:273px;top:320px;width:60px">19.6</div><div class="c d r l" style="left:333px;top:320px;width:60px">103.157</div><div class="c d r l" style="left:393px;top:320px;width:50px">0.01</div><div class="c d r l" style="left:443px;top:320px;width:60px">0.19</div><div class="c d r l" style="left:503px;top:320px;width:50px">0</div><div class="c d r l" style="left:553px;top:320px;width:50px">0</div><div class="c d r l" style="left:603px;top:320px;width:50px">1</div><div class="c d r l" style="left:653px;top:320px;width:50px">3</div><div class="c d r l" style="left:703px;top:320px;width:50px"></div><div class="c n" style="left:0;top:340px;width:33px">17</div><div class="c d j" style="left:33px;top:340px;width:120px"><span class="la">NHK</span>行き</div><div class="c d l" style="left:153px;top:340px;width:120px">ykNHK</div><div class="c d r l" style="left:273px;top:340px;width:60px">17.68</div><div class="c d r l" style="left:333px;top:340px;width:60px">98.222</div><div class="c d r l" style="left:393px;top:340px;width:50px">0.02</div><div class="c d r l" style="left:443px;top:340px;width:60px">0.18</div><div class="c d r l" style="left:503px;top:340px;width:50px">0</div><div class="c d r l" style="left:553px;top:340px;width:50px">0</div><div class="c d r l" style="left:603px;top:340px;width:50px">1</div><div class="c d r l" style="left:653px;top:340px;width:50px">3</div><div class="c d r l" style="left:703px;top:340px;width:50px"></div><div class="c n" style="left:0;top:360px;width:33px">18</div><div class="c d j" style="left:33px;top:360px;width:120px"><span class="la">NHK</span><span class="kh">いち</span></div><div class="c d l" style="left:153px;top:360px;width:120px">NHKit</div><div class="c d r l" style="left:273px;top:360px;width:60px">31.85</div><div class="c d r l" style="left:333px;top:360px;width:60px">530.833</div><div class="c d r l" style="left:393px;top:360px;width:50px">0.01</div><div class="c d r l" style="left:443px;top:360px;width:60px">0.06</div><div class="c d r l" style="left:503px;top:360px;width:50px">0</div><div class="c d r l" style="left:553px;top:360px;width:50px">0</div><div class="c d r l" style="left:603px;top:360px;width:50px">1</div><div class="c d r l" style="left:653px;top:360px;width:50px">2</div><div class="c d r l" style="left:703px;top:360px;width:50px"></div><div class="c n" style="left:0;top:380px;width:33px">19</div><div class="c d j" style="left:33px;top:380px;width:120px"><span class="kk">ミロク</span>悪</div><div class="c d l" style="left:153px;top:380px;width:120px">mrkak</div><div class="c d r l" style="left:273px;top:380px;width:60px">43.7</div><div class="c d r l" style="left:333px;top:380px;width:60px">624.285</div><div class="c d r l" style="left:393px;top:380px;width:50px">0.01</div><div class="c d r l" style="left:443px;top:380px;width:60px">0.07</div><div class="c d r l" style="left:503px;top:380px;width:50px">0</div><div class="c d r l" style="left:553px;top:380px;width:50px">0</div><div class="c d r l" style="left:603px;top:380px;width:50px">1</div><div class="c d r l" style="left:653px;top:380px;width:50px">2</div><div class="c d r l" style="left:703px;top:380px;width:50px"></div><div class="c n" style="left:0;top:400px;width:33px">20</div><div class="c d j" style="left:33px;top:400px;width:120px"><span class="kk">イオン</span>釣り</div><div class="c d l" style="left:153px;top:400px;width:120px"></div><div class="c d r l" style="left:273px;top:400px;width:60px"></div><div class="c d r l" style="left:333px;top:400px;width:60px"></div><div class="c d r l" style="left:393px;top:400px;width:50px"></div><div class="c d r l" style="left:443px;top:400px;width:60px"></div><div class="c d r l" style="left:503px;top:400px;width:50px"></div><div class="c d r l" style="left:553px;top:400px;width:50px"></div><div class="c d r l" style="left:603px;top:400px;width:50px"></div><div class="c d r l" style="left:653px;top:400px;width:50px"></div><div class="c d r l" style="left:703px;top:400px;width:50px"></div><div class="hs" style="top:403px;width:1400px"><svg style="position:absolute;left:4px;top:4px" width="9" height="9" viewBox="0 0 9 9"><path d="M6.5 1 L3 4.5 L6.5 8" fill="none" stroke="#555" stroke-width="1.8"/></svg><div class="th" style="width:1400px"></div></div></div></div>
</div>
<div class="vs" style="z-index:100"><svg style="position:absolute;left:4px;top:5px" width="9" height="7" viewBox="0 0 9 7"><path d="M1.2 6 L4.5 2.4 L7.8 6" fill="none" stroke="#505050" stroke-width="2"/></svg><div class="vt"></div></div>
</body></html>
